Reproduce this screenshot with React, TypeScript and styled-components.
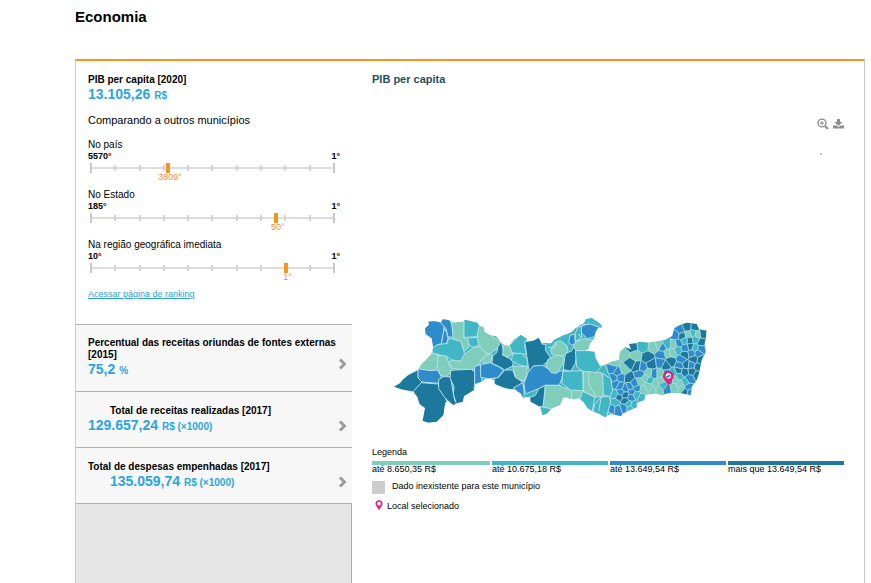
import React from "react";
import styled, { createGlobalStyle } from "styled-components";

const GlobalStyle = createGlobalStyle`
  *, *::before, *::after { box-sizing: border-box; }
  body {
    margin: 0;
    background: #fff;
    color: #000;
    font-family: "Liberation Sans", Arial, sans-serif;
    font-size: 10px;
    line-height: 12px;
  }
  h1, h2, h3, p, dl, dd, ul { margin: 0; padding: 0; }
`;

/* ---------- map data ---------- */

const palette = { G: "#7fcdbb", T: "#41b6c4", B: "#2f8bca", D: "#1c789d" };
type Level = keyof typeof palette;

const outline =
  "12,230 30,220 38,210 55,195 70,185 84,180 92,165 108,150 122,135 130,112 125,85 107,72 105,55 117,45 115,35 135,33 152,38 158,28 175,30 190,38 220,35 225,29 262,38 268,48 280,50 284,66 300,75 318,78 328,90 332,98 345,105 357,108 370,90 392,75 410,85 408,96 430,92 446,84 455,100 465,98 478,100 485,98 490,90 510,80 520,75 530,72 545,65 555,55 570,45 583,38 587,28 605,24 630,40 637,52 623,55 615,70 613,85 600,100 595,118 587,122 613,125 617,145 630,168 645,165 665,155 687,150 690,125 705,112 723,118 717,102 740,100 747,95 775,98 795,95 825,90 847,78 853,55 870,45 890,38 920,42 927,58 950,62 947,85 943,105 947,125 935,150 927,190 920,210 905,230 903,255 875,250 840,248 815,255 795,250 765,255 763,270 740,278 740,292 715,302 700,310 693,318 660,312 645,322 625,310 610,305 593,295 580,275 565,265 545,268 520,262 510,285 485,295 472,310 458,316 450,292 440,285 422,275 420,262 408,262 400,265 392,250 372,238 345,235 315,222 310,210 290,205 275,215 255,222 252,240 222,258 218,275 200,280 190,285 175,272 165,280 160,315 140,335 115,338 98,332 105,295 90,285 82,260 70,245 35,238";

const westAreas: [Level, string][] = [
  ["B", "100,30 152,34 163,44 160,72 154,102 142,104 136,118 120,112 122,84 100,72"],
  ["B", "152,38 158,24 180,30 188,52 190,82 174,80 168,56"],
  ["B", "163,56 170,68 174,86 168,104 154,104 158,78"],
  ["G", "184,34 222,32 222,84 236,90 238,110 222,124 214,98 190,84 186,52"],
  ["T", "222,26 268,34 272,52 262,80 222,82"],
  ["G", "268,48 284,50 286,66 300,74 334,96 328,112 298,132 272,124 264,100 262,72"],
  ["T", "232,84 262,82 266,106 250,112 238,106"],
  ["T", "128,114 142,104 172,100 176,84 212,94 222,124 224,142 210,154 184,150 176,142 140,132 128,130"],
  ["G", "128,130 144,134 142,166 138,180 120,182 86,178 100,150"],
  ["G", "144,136 170,138 176,160 186,180 168,202 150,194 142,166"],
  ["G", "222,134 250,112 272,110 290,134 272,150 270,162 252,178 222,178 188,176 176,156 186,150 212,154"],
  ["G", "274,150 294,132 308,136 300,160 280,160"],
  ["B", "84,176 120,182 142,180 154,200 144,220 96,216 82,204"],
  ["D", "4,230 30,206 84,180 84,204 96,216 72,246 30,240"],
  ["D", "94,218 146,222 154,244 164,254 170,276 160,342 90,342 104,294 84,280 70,244"],
  ["D", "146,208 160,200 182,200 188,240 194,270 202,282 188,288 162,260 146,236"],
  ["D", "182,182 196,180 244,178 256,188 252,242 218,278 200,284 190,252 192,230 180,204"],
  ["B", "254,170 270,164 274,180 274,196 276,216 254,224"],
  ["B", "272,164 300,158 330,172 340,182 322,204 294,206 272,202"],
  ["D", "334,94 340,120 344,138 370,152 368,168 344,180 328,170 306,160 308,138 320,128 324,110"],
  ["G", "340,104 358,108 368,130 356,140 338,136"],
  ["T", "358,106 392,72 412,86 404,108 410,132 394,132 366,128"],
  ["T", "368,132 394,130 412,148 412,170 388,164 364,152"],
  ["D", "404,94 448,80 456,102 468,104 466,120 482,144 458,168 430,168 418,186 412,150 408,120"],
  ["G", "368,168 412,170 410,192 402,214 378,204"],
  ["D", "344,180 368,180 376,202 398,216 390,224 370,242 314,226 312,206 326,202"],
  ["B", "370,234 398,218 402,240 402,268 392,254"],
  ["B", "414,188 430,168 458,166 494,188 522,180 516,204 508,226 466,226 446,236 406,252 402,220"],
  ["D", "446,236 466,226 464,246 462,264 460,292 438,288 418,274 420,262 436,256"],
  ["G", "466,226 508,226 518,232 546,240 550,266 522,262 510,286 484,298 458,292 464,260"],
  ["T", "450,290 484,296 470,318 456,318"],
  ["G", "468,168 474,148 502,134 524,142 516,166 500,190 484,188"],
  ["D", "524,142 528,130 546,122 550,110 562,124 556,160 542,184 520,178"],
  ["G", "482,120 496,96 512,92 532,108 534,124 522,136 500,136 486,134"],
  ["G", "550,112 556,96 582,86 610,90 604,112 582,124 560,122"],
  ["B", "575,48 602,40 632,54 624,56 614,80 592,86 574,68"],
  ["T", "583,24 604,20 638,46 640,56 602,42 578,44"],
  ["B", "540,76 554,72 556,100 546,106 536,98"],
  ["T", "556,70 564,50 574,50 574,84 556,94"],
  ["T", "556,122 614,122 620,148 634,170 616,190 580,186 560,170"],
  ["T", "518,184 578,182 580,244 544,242 516,220"],
  ["G", "580,184 634,188 642,210 640,258 616,262 580,242"],
  ["G", "544,240 580,242 570,268 546,270"],
  ["T", "578,244 614,262 606,308 580,290 570,266"],
  ["T", "614,284 632,262 658,258 662,276 648,326 610,306"],
  ["T", "638,190 662,206 668,240 660,260 640,254"],
];

/* Seed points of the small eastern municipalities; cells are derived from them. */
const eastSeeds: [number, number, Level][] = [
  [637, 183, "D"], [672, 158, "G"], [668, 175, "B"], [684, 186, "B"], [702, 180, "G"], [703, 134, "G"],
  [736, 138, "G"], [726, 110, "D"], [758, 108, "T"], [722, 160, "D"], [742, 170, "D"], [716, 204, "D"],
  [692, 202, "B"], [757, 172, "B"], [750, 192, "B"], [774, 144, "D"],
  [784, 162, "D"], [792, 110, "G"], [806, 106, "G"], [818, 112, "B"], [832, 104, "T"],
  [816, 135, "B"], [812, 158, "B"], [832, 130, "G"], [848, 128, "G"], [842, 155, "D"],
  [828, 166, "D"], [792, 192, "B"], [776, 190, "G"], [766, 205, "G"], [752, 215, "G"], [780, 212, "T"],
  [796, 220, "G"], [776, 230, "G"], [760, 240, "G"], [790, 242, "G"], [806, 240, "G"], [810, 192, "G"],
  [812, 212, "G"], [824, 205, "G"], [832, 192, "B"], [838, 212, "B"], [832, 236, "B"], [820, 226, "T"],
  [852, 232, "G"], [870, 222, "G"], [856, 208, "G"], [868, 198, "T"],
  [850, 188, "T"], [870, 168, "B"], [866, 182, "D"], [884, 186, "D"], [888, 164, "D"],
  [876, 148, "B"], [884, 134, "D"], [864, 120, "T"], [852, 104, "G"], [866, 100, "B"],
  [858, 74, "B"], [870, 60, "B"], [876, 78, "D"], [884, 92, "T"], [896, 74, "G"],
  [892, 50, "D"], [914, 52, "D"], [910, 70, "T"], [922, 74, "G"], [940, 72, "D"], [900, 92, "D"],
  [916, 88, "T"], [936, 98, "D"], [902, 110, "D"], [886, 114, "B"], [914, 114, "T"],
  [934, 116, "B"], [906, 130, "B"], [924, 130, "B"], [912, 148, "D"], [932, 150, "D"],
  [904, 166, "B"], [924, 172, "D"], [906, 184, "D"], [922, 194, "D"], [898, 206, "B"],
  [886, 216, "T"], [894, 232, "B"], [884, 244, "D"], [902, 246, "B"], [876, 236, "G"],
  [670, 206, "B"], [676, 222, "B"], [690, 230, "B"], [706, 236, "B"], [720, 230, "B"], [734, 222, "B"],
  [740, 236, "B"], [726, 246, "B"], [740, 254, "T"], [756, 262, "T"], [722, 262, "B"],
  [706, 256, "D"], [692, 246, "B"], [674, 254, "T"], [686, 262, "D"],
  [706, 272, "D"], [676, 276, "T"], [664, 298, "B"], [684, 300, "B"], [702, 294, "B"], [716, 282, "T"],
  [732, 286, "T"], [720, 296, "T"], [654, 318, "T"],
];

const eastBounds: Point[] = [[638, 150], [690, 90], [845, 30], [960, 30], [960, 270], [770, 330], [650, 330], [660, 262], [664, 210]];

type Point = [number, number];

function keepNearer(poly: Point[], a: Point, b: Point): Point[] {
  const side = (p: Point) =>
    (p[0] - (a[0] + b[0]) / 2) * (b[0] - a[0]) + (p[1] - (a[1] + b[1]) / 2) * (b[1] - a[1]);
  const kept: Point[] = [];
  poly.forEach((p, i) => {
    const q = poly[(i + 1) % poly.length];
    const sp = side(p);
    const sq = side(q);
    if (sp <= 0) kept.push(p);
    if (sp * sq < 0) {
      const t = sp / (sp - sq);
      kept.push([p[0] + (q[0] - p[0]) * t, p[1] + (q[1] - p[1]) * t]);
    }
  });
  return kept;
}

const eastAreas: [Level, string][] = eastSeeds.map(([x, y, level]) => {
  let cell = eastBounds;
  eastSeeds.forEach(([ox, oy]) => {
    if (ox !== x || oy !== y) cell = keepNearer(cell, [x, y], [ox, oy]);
  });
  return [level, cell.map((p) => p.map((n) => n.toFixed(1)).join(",")).join(" ")];
});

/* ---------- layout ---------- */

const Page = styled.main`
  display: flex;
  flex-direction: column;
  min-height: 100vh;
  padding: 8px 6px 0 75px;
`;

const PageTitle = styled.h1`
  font-size: 15px;
  line-height: 18px;
  margin-bottom: 33px;
`;

const Panel = styled.section`
  flex: 1;
  display: grid;
  grid-template-columns: 276px minmax(0, 1fr);
  border: 1px solid #ccc;
  border-top: 2px solid #f7941d;
  border-bottom: 0;
`;

const Sidebar = styled.div`
  display: flex;
  flex-direction: column;
`;

const Featured = styled.div`
  padding: 13px 12px 25px;
`;

const IndicatorName = styled.h2`
  font-size: 10px;
  line-height: 12px;
`;

const Value = styled.p`
  color: #2ca5e0;
  font-size: 14px;
  line-height: 17px;
  font-weight: bold;
`;

const Unit = styled.span`
  font-size: 10px;
`;

const CompareTitle = styled.h3`
  font-size: 11px;
  line-height: 14px;
  font-weight: normal;
  margin: 9px 0 12px;
`;

const Ranking = styled.div`
  height: 50px;
`;

const RankingName = styled.p`
  line-height: 12px;
`;

const Extremes = styled.div`
  display: flex;
  justify-content: space-between;
  font-size: 9px;
  line-height: 11px;
  font-weight: bold;
`;

const Scale = styled.div`
  position: relative;
  display: flex;
  align-items: center;
  justify-content: space-between;
  height: 10px;
  margin: 1px 5px 0 2px;
  background: linear-gradient(#ddd, #ddd) center / 100% 2px no-repeat;
`;

const Tick = styled.span<{ $end?: boolean }>`
  width: 2px;
  height: ${(p) => (p.$end ? 10 : 6)}px;
  background: ${(p) => (p.$end ? "#c8c8c8" : "#d3d3d3")};
`;

const Marker = styled.span<{ $at: number }>`
  position: absolute;
  top: 0;
  left: ${(p) => p.$at}%;
  width: 4px;
  height: 10px;
  background: #f7941d;
`;

const MarkerLabel = styled.span<{ $at: number }>`
  position: absolute;
  top: 9px;
  left: ${(p) => p.$at}%;
  transform: translateX(-50%);
  padding-left: 8px;
  color: #f58a3c;
  font-size: 9px;
  line-height: 10px;
`;

const RankingLink = styled.a`
  display: block;
  color: #2c9fd6;
  font-size: 9px;
  line-height: 10px;
`;

const Row = styled.button<{ $tall?: boolean }>`
  display: flex;
  align-items: center;
  justify-content: space-between;
  min-height: ${(p) => (p.$tall ? 67 : 56)}px;
  padding: 0 5px 0 12px;
  border: 0;
  border-top: 1px solid #b0b0b0;
  background: #f7f7f7;
  color: inherit;
  font: inherit;
  text-align: left;
  cursor: pointer;
`;

const RowText = styled.span`
  display: flex;
  flex-direction: column;
  font-weight: bold;
`;

const RowName = styled.span<{ $indent?: boolean }>`
  padding-left: ${(p) => (p.$indent ? 22 : 0)}px;
`;

const RowValue = styled(Value).attrs({ as: "span" })<{ $indent?: boolean }>`
  padding-left: ${(p) => (p.$indent ? 22 : 0)}px;
`;

const ChevronIcon = styled.svg`
  flex: none;
  margin-top: 12px;
`;

const Filler = styled.div`
  flex: 1;
  border-top: 1px solid #b0b0b0;
  border-right: 1px solid #b0b0b0;
  background: #e6e6e6;
`;

const Detail = styled.div`
  padding: 12px 20px 0;
`;

const DetailTitle = styled.h2`
  color: #1f4e5c;
  font-size: 11px;
  line-height: 13px;
`;

const Toolbar = styled.div`
  display: flex;
  justify-content: flex-end;
  gap: 4px;
  margin-top: 32px;
`;

const ToolButton = styled.button`
  display: flex;
  padding: 0;
  border: 0;
  background: none;
  color: #8c8c8c;
  cursor: pointer;
`;

const MapFigure = styled.svg`
  display: block;
  width: 320px;
  max-width: 100%;
  margin: 180px 0 0 18px;
`;

const Speck = styled.span`
  display: block;
  width: 2px;
  height: 2px;
  margin: 23px 22px -25px auto;
  background: #b9cfda;
`;

const Legend = styled.div`
  margin-top: 16px;
  font-size: 9px;
`;

const LegendScale = styled.ul`
  display: grid;
  grid-template-columns: repeat(4, 1fr);
  margin-top: 3px;
  list-style: none;
`;

const LegendStep = styled.li<{ $level: Level }>`
  line-height: 9px;
  white-space: nowrap;

  &::before {
    content: "";
    display: block;
    height: 4px;
    background: ${(p) => palette[p.$level]};
  }

  &:first-child {
    text-indent: 2px;
  }

  &:not(:first-child) {
    border-left: 2px solid #fff;
  }
`;

const LegendItem = styled.p`
  display: flex;
  align-items: flex-start;
  gap: 7px;
  margin-top: 7px;
  line-height: 11px;
`;

const PinItem = styled(LegendItem)`
  align-items: center;
  gap: 4px;
  margin-top: 5px;
  padding-left: 3px;
`;

const Swatch = styled.span`
  width: 13px;
  height: 13px;
  background: #ccc;
`;

const Chevron = () => (
  <ChevronIcon width="9" height="12" viewBox="0 0 9 12" fill="none" stroke="#999" strokeWidth="2.8" aria-hidden="true">
    <path d="M2 1.500 6.500 6 2 10.500" />
  </ChevronIcon>
);

const pinPath = "M0 0C-3-10-16-20-16-30a16 16 0 1 1 32 0C16-20 3-10 0 0ZM0-39a8.500 8.500 0 1 0 0 17 8.500 8.500 0 0 0 0-17Z";

const rankings = [
  { name: "No país", last: "5570°", rank: "3809°", at: 31 },
  { name: "No Estado", last: "185°", rank: "50°", at: 75 },
  { name: "Na região geográfica imediata", last: "10°", rank: "1°", at: 79 },
];

const legend: [Level, string][] = [
  ["G", "até 8.650,35 R$"],
  ["T", "até 10.675,18 R$"],
  ["B", "até 13.649,54 R$"],
  ["D", "mais que 13.649,54 R$"],
];

function RegionMap() {
  return (
    <MapFigure viewBox="0 0 960 360" role="img" aria-label="Mapa do PIB per capita por município">
      <clipPath id="state">
        <polygon points={outline} />
      </clipPath>
      <g clipPath="url(#state)" stroke="#b4dfe8" strokeLinejoin="round">
        <polygon points={outline} fill={palette.T} />
        <g strokeWidth="2">
          {eastAreas.map(([level, points], i) => (
            <polygon key={i} points={points} fill={palette[level]} />
          ))}
        </g>
        <g strokeWidth="3">
          {westAreas.map(([level, points], i) => (
            <polygon key={i} points={points} fill={palette[level]} />
          ))}
          <path d="M597 184 596 222 618 260M500 100 490 118M474 112 490 112M564 72 576 84M634 262 626 304" fill="none" />
        </g>
      </g>
      <circle cx="835" cy="198" r="9" fill="#fff" />
      <path d="M829 202 841 196" stroke={palette.B} strokeWidth="6" />
      <path d={pinPath} transform="translate(835 228)" fill="#ee1c78" fillRule="evenodd" />
    </MapFigure>
  );
}

export default function App() {
  return (
    <>
      <GlobalStyle />
      <Page>
        <PageTitle>Economia</PageTitle>
        <Panel>
          <Sidebar>
            <Featured>
              <IndicatorName>PIB per capita [2020]</IndicatorName>
              <Value>
                13.105,26 <Unit>R$</Unit>
              </Value>
              <CompareTitle>Comparando a outros municípios</CompareTitle>
              {rankings.map((r) => (
                <Ranking key={r.name}>
                  <RankingName>{r.name}</RankingName>
                  <Extremes>
                    <span>{r.last}</span>
                    <span>1°</span>
                  </Extremes>
                  <Scale>
                    {Array.from({ length: 11 }, (_, i) => (
                      <Tick key={i} $end={i === 0 || i === 10} />
                    ))}
                    <Marker $at={r.at} />
                    <MarkerLabel $at={r.at}>{r.rank}</MarkerLabel>
                  </Scale>
                </Ranking>
              ))}
              <RankingLink href="#ranking">Acessar página de ranking</RankingLink>
            </Featured>
            <Row type="button" $tall>
              <RowText>
                <RowName>Percentual das receitas oriundas de fontes externas [2015]</RowName>
                <RowValue>
                  75,2 <Unit>%</Unit>
                </RowValue>
              </RowText>
              <Chevron />
            </Row>
            <Row type="button">
              <RowText>
                <RowName $indent>Total de receitas realizadas [2017]</RowName>
                <RowValue>
                  129.657,24 <Unit>R$ (×1000)</Unit>
                </RowValue>
              </RowText>
              <Chevron />
            </Row>
            <Row type="button">
              <RowText>
                <RowName>Total de despesas empenhadas [2017]</RowName>
                <RowValue $indent>
                  135.059,74 <Unit>R$ (×1000)</Unit>
                </RowValue>
              </RowText>
              <Chevron />
            </Row>
            <Filler />
          </Sidebar>
          <Detail>
            <DetailTitle>PIB per capita</DetailTitle>
            <Toolbar>
              <ToolButton type="button" aria-label="Ampliar mapa">
                <svg width="12" height="12" viewBox="0 0 12 12" fill="none" stroke="currentColor" strokeWidth="1.4">
                  <circle cx="5" cy="5" r="3.900" />
                  <path d="M5 3v4M3 5h4" strokeWidth="1" />
                  <path d="m8 8 3 3" strokeWidth="2" />
                </svg>
              </ToolButton>
              <ToolButton type="button" aria-label="Baixar mapa">
                <svg width="11" height="12" viewBox="0 0 11 12" fill="currentColor">
                  <path d="M4 1h3v3h2.500L5.500 8 1.500 4H4ZM0 7.500h3.500l2 1.700 2-1.700H11V10.500H0Z" />
                </svg>
              </ToolButton>
            </Toolbar>
            <Speck />
            <RegionMap />
            <Legend>
              <p>Legenda</p>
              <LegendScale>
                {legend.map(([level, text]) => (
                  <LegendStep key={level} $level={level}>
                    {text}
                  </LegendStep>
                ))}
              </LegendScale>
              <LegendItem>
                <Swatch />
                Dado inexistente para este município
              </LegendItem>
              <PinItem>
                <svg width="8" height="14" viewBox="-18 -50 36 60" aria-hidden="true">
                  <path d={pinPath} fill="#ee1c78" fillRule="evenodd" />
                </svg>
                Local selecionado
              </PinItem>
            </Legend>
          </Detail>
        </Panel>
      </Page>
    </>
  );
}
